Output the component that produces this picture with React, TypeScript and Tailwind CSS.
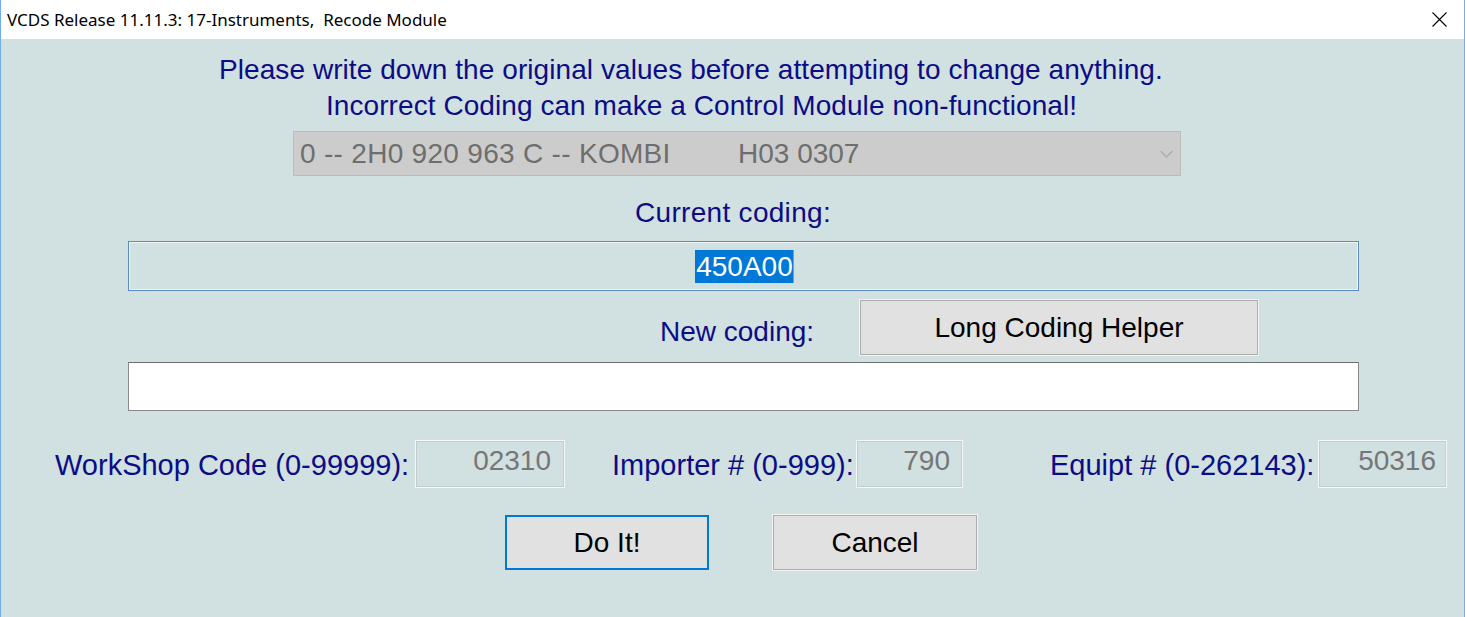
import React from "react";

const F = { fontFamily: '"Liberation Sans", Arial, sans-serif' };

export default function App() {
  return (
    <div
      className="w-[1465px] h-[617px] flex flex-col bg-[#d1e0e0] border-x border-[#70aef0] overflow-hidden"
      style={F}
    >
      {/* Title bar */}
      <div className="h-[39px] shrink-0 bg-white flex items-center justify-between pl-[6px] pr-[17px]">
        <span
          className="text-[17px] text-black"
          style={{ fontFamily: '"Noto Sans", "Open Sans", sans-serif' }}
        >
          VCDS Release 11.11.3: 17-Instruments,&nbsp; Recode Module
        </span>
        <svg width="15" height="15" viewBox="0 0 15 15">
          <path d="M0.5 0.5 L14.5 14.5 M14.5 0.5 L0.5 14.5" stroke="#000" strokeWidth="1.1" />
        </svg>
      </div>

      <div className="flex flex-col pt-[13px]">
        <div className="flex flex-col items-start text-[28px] leading-[36px] text-[#0c0c86] tracking-[0.07px]">
          <div className="ml-[218px]">Please write down the original values before attempting to change anything.</div>
          <div className="ml-[325px]">Incorrect Coding can make a Control Module non-functional!</div>
        </div>

        {/* dropdown */}
        <div className="mt-[7px] ml-[292px] w-[888px] h-[45px] bg-[#cccccc] border border-[#bcbcbc] flex items-center pl-[6px] pr-[7px] text-[28px] text-[#6e6e6e]">
          <span className="w-[438px] tracking-[0.3px]">0 -- 2H0 920 963 C -- KOMBI</span>
          <span className="flex-1">H03 0307</span>
          <svg width="13" height="8" viewBox="0 0 13 8">
            <path d="M0.5 1 L6.5 7 L12.5 1" stroke="#a8a8a8" strokeWidth="1.2" fill="none" />
          </svg>
        </div>

        <div className="mt-[23px] text-center text-[28px] leading-[28px] text-[#0c0c86]">
          <span className="ml-[1px] tracking-[0.3px]">Current coding:</span>
        </div>

        {/* current coding box */}
        <div className="mt-[14px] ml-[127px] w-[1231px] h-[50px] border border-[#5a8bc2] shadow-[inset_0_0_0_1px_#eef4f4] flex items-center justify-center">
          <span className="text-[28px] leading-[33px] bg-[#0078d7] text-white pl-[1px] ml-[2px] border-r border-[#e08040]">
            450A00
          </span>
        </div>

        {/* New coding row */}
        <div className="mt-[9px] flex items-start">
          <span className="ml-[659px] mt-[16px] w-[200px] text-[28px] leading-[32px] text-[#0c0c86]">New coding:</span>
          <div className="w-[398px] h-[55px] bg-[#e1e1e1] border border-[#adadad] shadow-[0_0_0_1px_#f4f4f4] flex items-center justify-center text-[28px] text-black">
            Long Coding Helper
          </div>
        </div>

        {/* new coding input */}
        <div className="mt-[7px] ml-[127px] w-[1231px] h-[49px] bg-white border border-[#8a8a8a] border-t-[#6e6e6e]" />

        {/* codes row */}
        <div className="mt-[29px] flex items-center text-[29px] leading-[32px] text-[#0c0c86]">
          <span className="ml-[54px] w-[360px] pt-[2px]">WorkShop Code (0-99999):</span>
          <div className="w-[150px] h-[48px] border border-[#f6f8f8] shadow-[inset_0_0_0_1px_#c4cccc] flex justify-end pt-[4px] pr-[13px] text-[28px] text-[#767676]">
            02310
          </div>
          <span className="ml-[47px] w-[244px] pt-[2px]">Importer # (0-999):</span>
          <div className="w-[107px] h-[48px] border border-[#f6f8f8] shadow-[inset_0_0_0_1px_#c4cccc] flex justify-end pt-[4px] pr-[12px] text-[28px] text-[#767676]">
            790
          </div>
          <span className="ml-[87px] w-[268px] pt-[2px]">Equipt # (0-262143):</span>
          <div className="w-[129px] h-[48px] border border-[#f6f8f8] shadow-[inset_0_0_0_1px_#c4cccc] flex justify-end pt-[4px] pr-[10px] text-[28px] text-[#767676]">
            50316
          </div>
        </div>

        {/* buttons */}
        <div className="mt-[27px] flex text-[28px] text-black">
          <div className="ml-[504px] w-[204px] h-[55px] bg-[#e1e1e1] border-2 border-[#0078d7] flex items-center justify-center">
            Do It!
          </div>
          <div className="ml-[64px] w-[204px] h-[55px] bg-[#e1e1e1] border border-[#adadad] shadow-[0_0_0_1px_#f4f4f4] flex items-center justify-center">
            Cancel
          </div>
        </div>
      </div>
    </div>
  );
}
